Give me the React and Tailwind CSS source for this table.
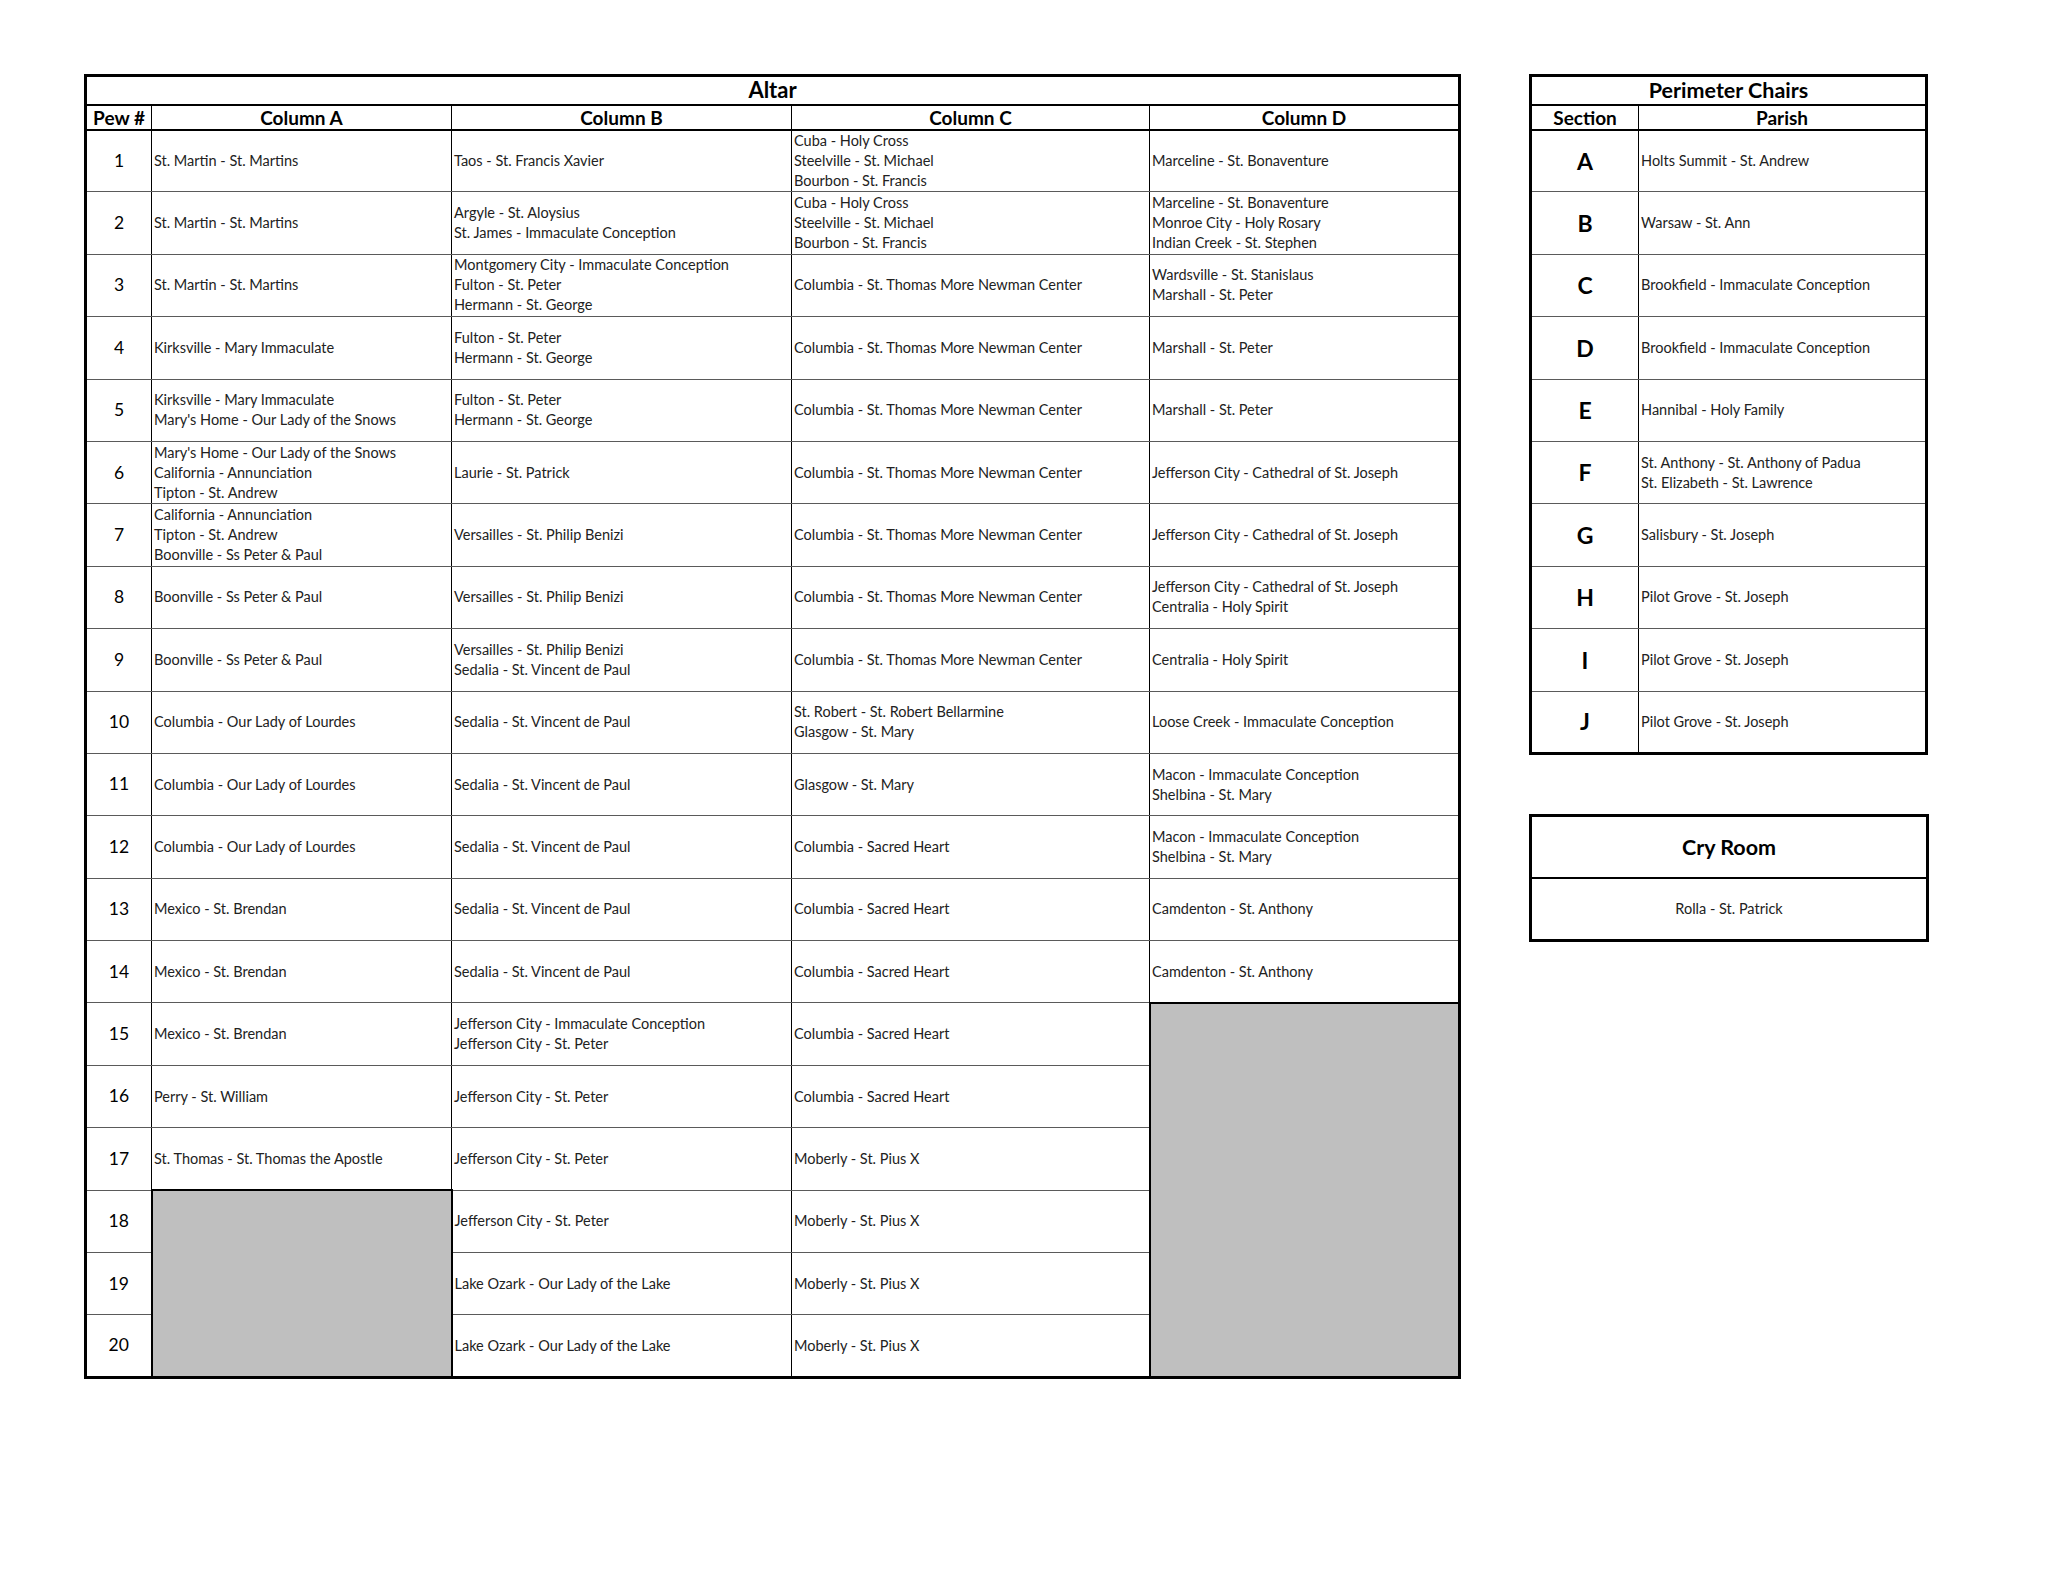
import React from 'react';

const pews = [
  { a: 'St. Martin - St. Martins', b: 'Taos - St. Francis Xavier', c: ['Cuba - Holy Cross', 'Steelville - St. Michael', 'Bourbon - St. Francis'], d: 'Marceline - St. Bonaventure' },
  { a: 'St. Martin - St. Martins', b: ['Argyle - St. Aloysius', 'St. James - Immaculate Conception'], c: ['Cuba - Holy Cross', 'Steelville - St. Michael', 'Bourbon - St. Francis'], d: ['Marceline - St. Bonaventure', 'Monroe City - Holy Rosary', 'Indian Creek - St. Stephen'] },
  { a: 'St. Martin - St. Martins', b: ['Montgomery City - Immaculate Conception', 'Fulton - St. Peter', 'Hermann - St. George'], c: 'Columbia - St. Thomas More Newman Center', d: ['Wardsville - St. Stanislaus', 'Marshall - St. Peter'] },
  { a: 'Kirksville - Mary Immaculate', b: ['Fulton - St. Peter', 'Hermann - St. George'], c: 'Columbia - St. Thomas More Newman Center', d: 'Marshall - St. Peter' },
  { a: ['Kirksville - Mary Immaculate', "Mary's Home - Our Lady of the Snows"], b: ['Fulton - St. Peter', 'Hermann - St. George'], c: 'Columbia - St. Thomas More Newman Center', d: 'Marshall - St. Peter' },
  { a: ["Mary's Home - Our Lady of the Snows", 'California - Annunciation', 'Tipton - St. Andrew'], b: 'Laurie - St. Patrick', c: 'Columbia - St. Thomas More Newman Center', d: 'Jefferson City - Cathedral of St. Joseph' },
  { a: ['California - Annunciation', 'Tipton - St. Andrew', 'Boonville - Ss Peter & Paul'], b: 'Versailles - St. Philip Benizi', c: 'Columbia - St. Thomas More Newman Center', d: 'Jefferson City - Cathedral of St. Joseph' },
  { a: 'Boonville - Ss Peter & Paul', b: 'Versailles - St. Philip Benizi', c: 'Columbia - St. Thomas More Newman Center', d: ['Jefferson City - Cathedral of St. Joseph', 'Centralia - Holy Spirit'] },
  { a: 'Boonville - Ss Peter & Paul', b: ['Versailles - St. Philip Benizi', 'Sedalia - St. Vincent de Paul'], c: 'Columbia - St. Thomas More Newman Center', d: 'Centralia - Holy Spirit' },
  { a: 'Columbia - Our Lady of Lourdes', b: 'Sedalia - St. Vincent de Paul', c: ['St. Robert - St. Robert Bellarmine', 'Glasgow - St. Mary'], d: 'Loose Creek - Immaculate Conception' },
  { a: 'Columbia - Our Lady of Lourdes', b: 'Sedalia - St. Vincent de Paul', c: 'Glasgow - St. Mary', d: ['Macon - Immaculate Conception', 'Shelbina - St. Mary'] },
  { a: 'Columbia - Our Lady of Lourdes', b: 'Sedalia - St. Vincent de Paul', c: 'Columbia - Sacred Heart', d: ['Macon - Immaculate Conception', 'Shelbina - St. Mary'] },
  { a: 'Mexico - St. Brendan', b: 'Sedalia - St. Vincent de Paul', c: 'Columbia - Sacred Heart', d: 'Camdenton - St. Anthony' },
  { a: 'Mexico - St. Brendan', b: 'Sedalia - St. Vincent de Paul', c: 'Columbia - Sacred Heart', d: 'Camdenton - St. Anthony' },
  { a: 'Mexico - St. Brendan', b: ['Jefferson City - Immaculate Conception', 'Jefferson City - St. Peter'], c: 'Columbia - Sacred Heart', d: 'GRAY6' },
  { a: 'Perry - St. William', b: 'Jefferson City - St. Peter', c: 'Columbia - Sacred Heart' },
  { a: 'St. Thomas - St. Thomas the Apostle', b: 'Jefferson City - St. Peter', c: 'Moberly - St. Pius X' },
  { a: 'GRAY3', b: 'Jefferson City - St. Peter', c: 'Moberly - St. Pius X' },
  { b: 'Lake Ozark - Our Lady of the Lake', c: 'Moberly - St. Pius X' },
  { b: 'Lake Ozark - Our Lady of the Lake', c: 'Moberly - St. Pius X' },
];

const perimeter = [
  ['A', 'Holts Summit - St. Andrew'],
  ['B', 'Warsaw - St. Ann'],
  ['C', 'Brookfield - Immaculate Conception'],
  ['D', 'Brookfield - Immaculate Conception'],
  ['E', 'Hannibal - Holy Family'],
  ['F', ['St. Anthony - St. Anthony of Padua', 'St. Elizabeth - St. Lawrence']],
  ['G', 'Salisbury - St. Joseph'],
  ['H', 'Pilot Grove - St. Joseph'],
  ['I', 'Pilot Grove - St. Joseph'],
  ['J', 'Pilot Grove - St. Joseph'],
];

const cellCls = 'px-[2px] py-0 align-middle text-left text-[14.5px] leading-[20px] text-[#222] border-x border-x-black border-y border-y-[#5a5a5a]';

function Lines({ value }) {
  const list = Array.isArray(value) ? value : [value];
  return list.map((line, i) => <div key={i} className="whitespace-nowrap">{line}</div>);
}

function Cell({ value }) {
  if (value === undefined) return null;
  if (value === 'GRAY6') return <td rowSpan={6} className="bg-[#bfbfbf] border-2 border-black" />;
  if (value === 'GRAY3') return <td rowSpan={3} className="bg-[#bfbfbf] border-2 border-black" />;
  return (
    <td className={cellCls}>
      <Lines value={value} />
    </td>
  );
}

export default function App() {
  return (
    <div className="min-h-screen bg-white text-black font-['Lato',sans-serif] pl-[84px] pt-[74px] flex gap-[68px] items-start">
      <table className="table-fixed border-collapse w-[1374px] border-[3px] border-black">
        <colgroup>
          <col className="w-[66px]" />
          <col className="w-[300px]" />
          <col className="w-[340px]" />
          <col className="w-[358px]" />
          <col className="w-[310px]" />
        </colgroup>
        <thead>
          <tr className="h-[29px]">
            <th colSpan={5} className="text-[22px] font-bold leading-none border-b-2 border-black p-0">Altar</th>
          </tr>
          <tr className="h-[25px]">
            {['Pew #', 'Column A', 'Column B', 'Column C', 'Column D'].map((h) => (
              <th key={h} className="text-[19px] font-bold leading-none border-b-2 border-black border-x p-0">{h}</th>
            ))}
          </tr>
        </thead>
        <tbody>
          {pews.map((p, i) => (
            <tr key={i} className="h-[62.4px]">
              <td className="text-center align-middle text-[17.5px] border-x border-x-black border-y border-y-[#5a5a5a] p-0">{i + 1}</td>
              <Cell value={p.a} />
              <Cell value={p.b} />
              <Cell value={p.c} />
              <Cell value={p.d} />
            </tr>
          ))}
        </tbody>
      </table>

      <div className="flex flex-col gap-[59px]">
        <table className="table-fixed border-collapse w-[396px] border-[3px] border-black">
          <colgroup>
            <col className="w-[108px]" />
            <col className="w-[288px]" />
          </colgroup>
          <thead>
            <tr className="h-[29px]">
              <th colSpan={2} className="text-[21.5px] font-bold leading-none border-b-2 border-black p-0">Perimeter Chairs</th>
            </tr>
            <tr className="h-[25px]">
              <th className="text-[19px] font-bold leading-none border-b-2 border-black border-x p-0">Section</th>
              <th className="text-[19px] font-bold leading-none border-b-2 border-black border-x p-0">Parish</th>
            </tr>
          </thead>
          <tbody>
            {perimeter.map(([sec, parish]) => (
              <tr key={sec} className="h-[62.4px]">
                <td className="text-center align-middle text-[23px] font-bold border-x border-x-black border-y border-y-[#5a5a5a] p-0">{sec}</td>
                <Cell value={parish} />
              </tr>
            ))}
          </tbody>
        </table>

        <table className="table-fixed border-collapse w-[400px] border-[3px] border-black">
          <tbody>
            <tr className="h-[63px]">
              <td className="text-center align-middle text-[21.5px] font-bold border-b-2 border-black p-0">Cry Room</td>
            </tr>
            <tr className="h-[62px]">
              <td className="text-center align-middle text-[14.5px] text-[#222] p-0">Rolla - St. Patrick</td>
            </tr>
          </tbody>
        </table>
      </div>
    </div>
  );
}
